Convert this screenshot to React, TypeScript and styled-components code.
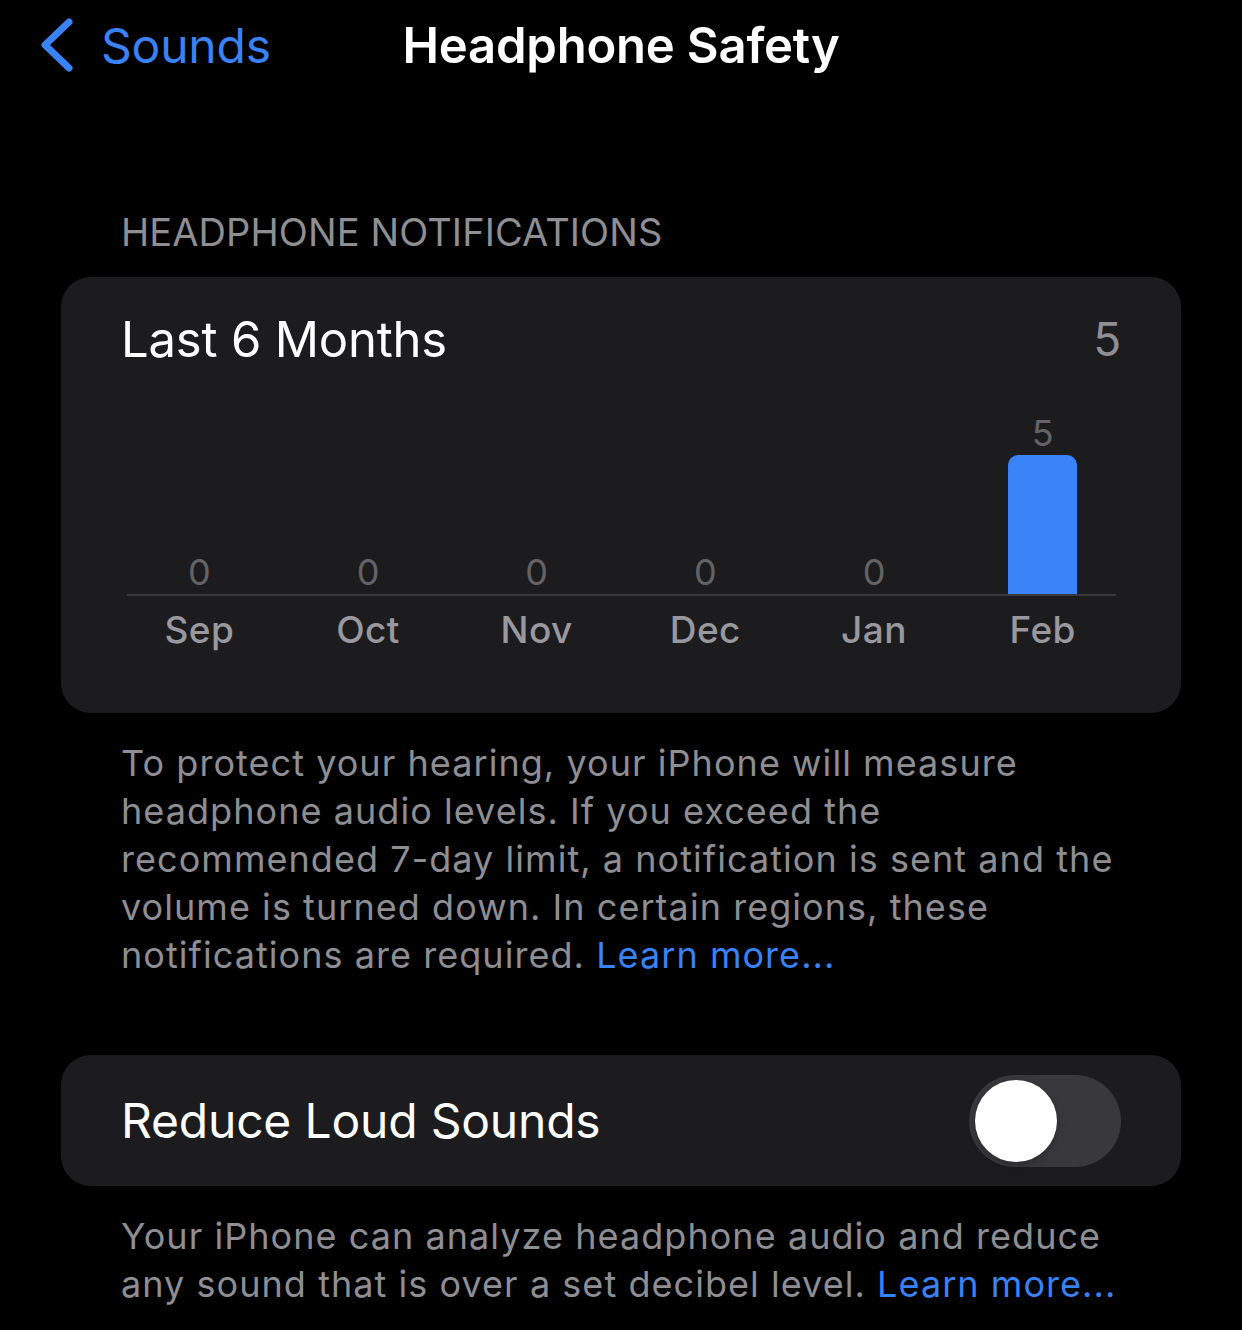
import React from 'react';
import styled, { createGlobalStyle } from 'styled-components';

const GlobalStyle = createGlobalStyle`
  html, body {
    margin: 0;
    padding: 0;
    background: #000;
  }
  body {
    font-family: Inter, "Noto Sans", "Liberation Sans", sans-serif;
    color: #fff;
    -webkit-font-smoothing: antialiased;
  }
`;

const Screen = styled.div`
  width: 1242px;
  min-height: 1330px;
  background: #000;
  overflow: hidden;
`;

const NavBar = styled.div`
  position: relative;
  height: 90px;
  display: flex;
  align-items: center;
  justify-content: center;
`;

const BackButton = styled.a`
  position: absolute;
  left: 38px;
  top: 0;
  height: 90px;
  display: flex;
  align-items: center;
  gap: 27px;
  color: #3a82f7;
  font-size: 48px;
  text-decoration: none;
  letter-spacing: -0.2px;
`;

const NavTitle = styled.h1`
  margin: 0;
  font-size: 49px;
  font-weight: 600;
  letter-spacing: -0.2px;
  color: #fff;
`;

const SectionHeader = styled.div`
  margin: 118px 0 21px 121px;
  font-size: 38px;
  line-height: 48px;
  color: #8e8e93;
  letter-spacing: 0.1px;
`;

const Card = styled.div<{ $pad?: string }>`
  margin: 0 61px;
  background: #1c1c1e;
  border-radius: 30px;
  padding: ${p => p.$pad || '0 60px'};
`;

const CardHeader = styled.div`
  display: flex;
  justify-content: space-between;
  align-items: center;
  height: 64px;
  font-size: 49px;
  letter-spacing: -0.2px;
`;

const Total = styled.span`
  color: #8e8e93;
  font-size: 46px;
`;

const Columns = styled.div`
  display: grid;
  grid-template-columns: repeat(6, 1fr);
  margin: 0 -6px;
`;

const BarCol = styled.div`
  height: 223px;
  display: flex;
  flex-direction: column;
  justify-content: flex-end;
  align-items: center;
`;

const Value = styled.div`
  font-size: 36px;
  line-height: 40px;
  color: #636366;
  margin-bottom: 2px;
`;

const Bar = styled.div`
  width: 69px;
  background: #3a82f7;
  border-radius: 10px 10px 0 0;
`;

const Axis = styled.div`
  height: 2px;
  background: #3a3a3c;
  margin: 0 5px 0 6px;
`;

const Month = styled.div`
  margin-top: 9px;
  text-align: center;
  font-size: 37px;
  font-weight: 500;
  line-height: 50px;
  color: #98989e;
  letter-spacing: 0.4px;
`;

const Footer = styled.p`
  margin: 26px 0 0 121px;
  font-size: 36px;
  line-height: 48px;
  color: #8e8e93;
  white-space: nowrap;
  letter-spacing: 1.05px;
`;

const Link = styled.a`
  color: #3a82f7;
  text-decoration: none;
`;

const ToggleRow = styled.div`
  height: 131px;
  display: flex;
  align-items: center;
  justify-content: space-between;
  font-size: 48px;
  letter-spacing: -0.2px;
`;

const Switch = styled.div<{ $on?: boolean }>`
  width: 152px;
  height: 92px;
  border-radius: 46px;
  background: ${p => (p.$on ? '#30d158' : '#39393d')};
  padding: 5px 6px;
  box-sizing: border-box;
  display: flex;
  justify-content: ${p => (p.$on ? 'flex-end' : 'flex-start')};
`;

const Knob = styled.div`
  width: 82px;
  height: 82px;
  border-radius: 50%;
  background: #fff;
  box-shadow: 0 3px 8px rgba(0, 0, 0, 0.25), 0 0 1px rgba(0, 0, 0, 0.2);
`;

const data = [
  { month: 'Sep', value: 0 },
  { month: 'Oct', value: 0 },
  { month: 'Nov', value: 0 },
  { month: 'Dec', value: 0 },
  { month: 'Jan', value: 0 },
  { month: 'Feb', value: 5 },
];

const BAR_MAX = 139;

const Chevron = () => (
  <svg width="36" height="56" viewBox="0 0 36 56">
    <path d="M31 5 L7 28 L31 51" fill="none" stroke="#3a82f7" strokeWidth="7" strokeLinecap="round" strokeLinejoin="round" />
  </svg>
);

const App = () => {
  const max = Math.max(...data.map(d => d.value), 1);
  return (
    <Screen>
      <GlobalStyle />
      <NavBar>
        <BackButton href="#">
          <Chevron />
          Sounds
        </BackButton>
        <NavTitle>Headphone Safety</NavTitle>
      </NavBar>

      <SectionHeader>HEADPHONE NOTIFICATIONS</SectionHeader>
      <Card $pad="30px 60px 58px">
        <CardHeader>
          <span>Last 6 Months</span>
          <Total>5</Total>
        </CardHeader>
        <Columns>
          {data.map(d => (
            <BarCol key={d.month}>
              <Value>{d.value}</Value>
              {d.value > 0 && <Bar style={{ height: (d.value / max) * BAR_MAX }} />}
            </BarCol>
          ))}
        </Columns>
        <Axis />
        <Columns>
          {data.map(d => (
            <Month key={d.month}>{d.month}</Month>
          ))}
        </Columns>
      </Card>
      <Footer>
        To protect your hearing, your iPhone will measure
        <br />
        headphone audio levels. If you exceed the
        <br />
        recommended 7-day limit, a notification is sent and the
        <br />
        volume is turned down. In certain regions, these
        <br />
        notifications are required. <Link href="#">Learn more...</Link>
      </Footer>

      <Card style={{ marginTop: 76 }}>
        <ToggleRow>
          <span>Reduce Loud Sounds</span>
          <Switch>
            <Knob />
          </Switch>
        </ToggleRow>
      </Card>
      <Footer>
        Your iPhone can analyze headphone audio and reduce
        <br />
        any sound that is over a set decibel level. <Link href="#">Learn more...</Link>
      </Footer>
    </Screen>
  );
};

export default App;
